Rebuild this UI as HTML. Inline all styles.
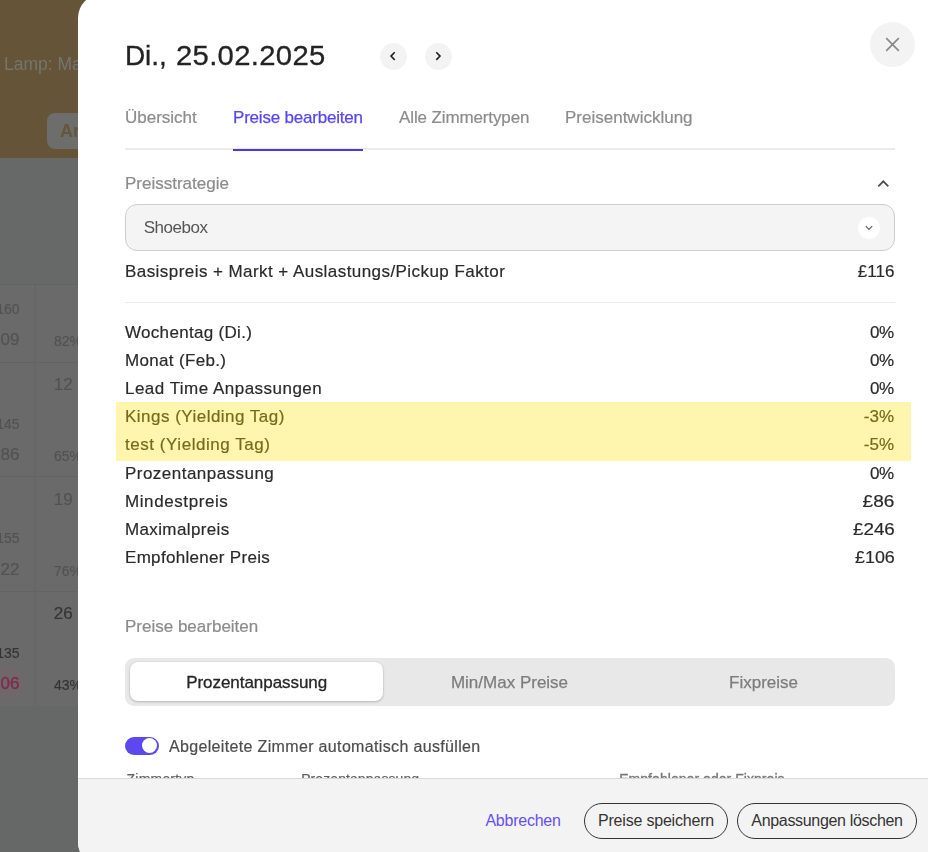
<!DOCTYPE html>
<html lang="de">
<head>
<meta charset="utf-8">
<title>Preise bearbeiten</title>
<style>
*{box-sizing:border-box;margin:0;padding:0}
html,body{width:928px;height:852px;overflow:hidden}
body{font-family:"Liberation Sans",sans-serif;background:#676868;position:relative;color:#262626}
.abs{position:absolute;white-space:nowrap}
/* ---------- dimmed background page ---------- */
.bgwrap{left:0;top:0;width:90px;height:852px;will-change:transform;overflow:hidden}
.bg-top{left:0;top:0;width:928px;height:158px;background:#655437}
.bg-cells{left:0;top:285px;width:90px;height:421px;background:#6a6a6a}
.bg-lamp{left:4px;top:54px;font-size:17.5px;color:#747572;line-height:20px}
.bg-btn{left:47px;top:113px;width:60px;height:36px;border-radius:8px;background:#6d6d6c}
.bg-btn span{position:absolute;left:13px;top:8px;font-size:18px;font-weight:bold;color:#65553a;line-height:20px}
.bg-line-h{left:0;height:1px;background:#626363;width:90px}
.bg-line-v{top:285px;width:2px;height:421px;background:#656766}
.bg-foot{left:0;top:706px;width:90px;height:146px;background:#666867}
.bg-n{line-height:16px;-webkit-text-stroke:0.15px}
/* ---------- modal ---------- */
.modal{will-change:transform;left:78px;top:-6px;width:900px;height:872px;background:#fff;border-radius:24px;overflow:hidden}
.m{position:absolute;left:-78px;top:6px;width:928px;height:852px}
.title{left:125px;top:37px;font-size:28px;line-height:38px;color:#232323;letter-spacing:0.74px;-webkit-text-stroke:0.3px #232323}
.circ{border-radius:50%;background:#f3f3f3}
.tab{top:108.4px;font-size:17px;line-height:20px;color:#8c8c8c;-webkit-text-stroke:0.2px #8c8c8c}
.tab.act{color:#5847ee;-webkit-text-stroke:0.25px #5847ee}
.lbl{font-size:17px;line-height:20px;color:#8c8c8c;-webkit-text-stroke:0.2px #8c8c8c}
.row{left:125px;width:770px;height:20px;font-size:17px;line-height:20px;color:#2a2a2a;-webkit-text-stroke:0.18px #2a2a2a}
.row .l{position:absolute;left:0;top:0;letter-spacing:0.44px}
.row .r{position:absolute;right:1px;top:0}
.row.y{color:#766b1b;-webkit-text-stroke:0.18px #766b1b}
.seg{left:125px;top:658px;width:770px;height:48px;border-radius:9px;background:#e8e8e8}
.seg .pill{position:absolute;left:4.5px;top:4.2px;width:253.7px;height:39px;border-radius:8px;background:#fff;box-shadow:0 1px 2.5px rgba(0,0,0,.2),0 0 1.5px rgba(0,0,0,.12)}
.segt{top:673px;font-size:17px;line-height:20px;text-align:center;width:253px}
.hd{top:771.4px;font-size:14px;line-height:16px;color:#606060;letter-spacing:0.2px;-webkit-text-stroke:0.2px #606060}
.fwrap{left:0;top:0;width:928px;height:852px;overflow:hidden}
.footer{left:78px;top:778px;width:860px;height:88px;background:#f3f3f3;border-top:1px solid #d9d9d9;border-bottom-left-radius:24px}
.btn{top:803px;height:35.5px;border:1.2px solid #333;border-radius:18px;font-size:16px;line-height:20px;padding-top:7.1px;text-align:center;color:#333}
</style>
</head>
<body>
<!-- background page (dimmed) -->
<div class="abs bgwrap">
<div class="abs bg-top"></div>
<div class="abs bg-lamp">Lamp: Ma</div>
<div class="abs bg-btn"><span>An</span></div>
<div class="abs bg-cells"></div>
<div class="abs bg-foot"></div>
<div class="abs bg-line-h" style="top:284px"></div>
<div class="abs bg-line-h" style="top:362px"></div>
<div class="abs bg-line-h" style="top:476px"></div>
<div class="abs bg-line-h" style="top:591px"></div>
<div class="abs bg-line-v" style="left:34px"></div>
<div class="abs bg-n" style="left:-3.8px;top:301.2px;font-size:14px;color:#515252">160</div>
<div class="abs bg-n" style="left:0.5px;top:332.2px;font-size:17px;color:#515252">09</div>
<div class="abs bg-n" style="left:54px;top:332.8px;font-size:14px;color:#515252">82%</div>
<div class="abs bg-n" style="left:-3.8px;top:415.8px;font-size:14px;color:#515252">145</div>
<div class="abs bg-n" style="left:0.5px;top:447.3px;font-size:17px;color:#515252">86</div>
<div class="abs bg-n" style="left:54px;top:448.1px;font-size:14px;color:#515252">65%</div>
<div class="abs bg-n" style="left:53.7px;top:377.1px;font-size:17px;color:#515252">12</div>
<div class="abs bg-n" style="left:-3.8px;top:530.2px;font-size:14px;color:#515252">155</div>
<div class="abs bg-n" style="left:0.5px;top:561.8px;font-size:17px;color:#515252">22</div>
<div class="abs bg-n" style="left:54px;top:562.6px;font-size:14px;color:#515252">76%</div>
<div class="abs bg-n" style="left:53.7px;top:491.6px;font-size:17px;color:#515252">19</div>
<div class="abs" style="left:-20px;top:667px;width:44.6px;height:32px;border-radius:16px;background:#6f676a"></div>
<div class="abs bg-n" style="left:-3.8px;top:644.8px;font-size:14px;color:#343434">135</div>
<div class="abs bg-n" style="left:0.5px;top:676.3px;font-size:17px;color:#7e2b4a;-webkit-text-stroke:0.3px #7e2b4a">06</div>
<div class="abs bg-n" style="left:54px;top:677.1px;font-size:14px;color:#343434">43%</div>
<div class="abs bg-n" style="left:53.7px;top:606.1px;font-size:17px;color:#343434">26</div>
</div>

<!-- modal -->
<div class="abs modal"><div class="m">

<div class="abs title" style="letter-spacing:-0.1px">Di.,</div>
<div class="abs title" style="left:176px;letter-spacing:0.3px;transform:scaleX(1.045);transform-origin:left center">25.02.2025</div>

<div class="abs circ" style="left:380px;top:43px;width:27px;height:27px"></div>
<div class="abs circ" style="left:425px;top:43px;width:27px;height:27px"></div>
<svg class="abs" style="left:380px;top:43px" width="27" height="27" viewBox="0 0 27 27"><path d="M14.7 9.3 L11 13.1 L14.7 16.9" fill="none" stroke="#222" stroke-width="1.6"/></svg>
<svg class="abs" style="left:425px;top:43px" width="27" height="27" viewBox="0 0 27 27"><path d="M11.3 9.3 L15 13.1 L11.3 16.9" fill="none" stroke="#222" stroke-width="1.6"/></svg>

<div class="abs circ" style="left:870px;top:22px;width:45px;height:45px"></div>
<svg class="abs" style="left:870px;top:22px" width="45" height="45" viewBox="0 0 45 45"><path d="M16.2 16.2 L28.8 28.8 M28.8 16.2 L16.2 28.8" fill="none" stroke="#8a8a8a" stroke-width="1.7"/></svg>

<div class="abs tab" style="left:125px">Übersicht</div>
<div class="abs tab act" style="left:233px;letter-spacing:-0.2px">Preise bearbeiten</div>
<div class="abs tab" style="left:399px;letter-spacing:-0.12px">Alle Zimmertypen</div>
<div class="abs tab" style="left:565px">Preisentwicklung</div>
<div class="abs" style="left:125px;top:148px;width:770px;height:2px;background:#ebebeb"></div>
<div class="abs" style="left:233px;top:149px;width:130px;height:2px;background:#4c39e6"></div>

<div class="abs lbl" style="left:125px;top:173.8px">Preisstrategie</div>
<svg class="abs" style="left:875px;top:176px" width="16" height="14" viewBox="0 0 16 14"><path d="M3.3 10.4 L8.3 5.3 L13.3 10.4" fill="none" stroke="#4d4d4d" stroke-width="1.7"/></svg>

<div class="abs" style="left:125px;top:204px;width:770px;height:47px;border:1px solid #cdcdcd;border-radius:12px;background:#f4f4f4"></div>
<div class="abs" style="left:143.7px;top:218px;font-size:17px;line-height:20px;color:#555;letter-spacing:-0.45px">Shoebox</div>
<div class="abs circ" style="left:858px;top:217px;width:22px;height:22px;background:#fff"></div>
<svg class="abs" style="left:858px;top:217px" width="22" height="22" viewBox="0 0 22 22"><path d="M7.8 9.2 L11 12.4 L14.2 9.2" fill="none" stroke="#5e5e5e" stroke-width="1.15"/></svg>

<div class="abs row" style="top:262.1px"><span class="l" style="letter-spacing:0.44px">Basispreis + Markt + Auslastungs/Pickup Faktor</span><span class="r" style="letter-spacing:0.07px;margin-right:-0.5px">£116</span></div>
<div class="abs" style="left:125px;top:302px;width:770px;height:1px;background:#ececec"></div>

<div class="abs" style="left:116px;top:402px;width:795px;height:59px;background:#fef5ae"></div>
<div class="abs row" style="top:322.9px"><span class="l" style="letter-spacing:0.31px">Wochentag (Di.)</span><span class="r" style="letter-spacing:-0.6px;margin-right:0.6px">0%</span></div>
<div class="abs row" style="top:350.9px"><span class="l" style="letter-spacing:0.33px">Monat (Feb.)</span><span class="r" style="letter-spacing:-0.6px;margin-right:0.6px">0%</span></div>
<div class="abs row" style="top:378.6px"><span class="l" style="letter-spacing:0.48px">Lead Time Anpassungen</span><span class="r" style="letter-spacing:-0.6px;margin-right:0.6px">0%</span></div>
<div class="abs row y" style="top:406.6px"><span class="l" style="letter-spacing:0.48px">Kings (Yielding Tag)</span><span class="r" style="letter-spacing:0px;margin-right:0px">-3%</span></div>
<div class="abs row y" style="top:434.5px"><span class="l" style="letter-spacing:0.55px">test (Yielding Tag)</span><span class="r" style="letter-spacing:0px;margin-right:0px">-5%</span></div>
<div class="abs row" style="top:463.7px"><span class="l" style="letter-spacing:0.47px">Prozentanpassung</span><span class="r" style="letter-spacing:-0.6px;margin-right:0.6px">0%</span></div>
<div class="abs row" style="top:491.7px"><span class="l" style="letter-spacing:0.59px">Mindestpreis</span><span class="r" style="transform:scaleX(1.12);transform-origin:right center;margin-right:-0.3px">£86</span></div>
<div class="abs row" style="top:519.7px"><span class="l" style="letter-spacing:0.37px">Maximalpreis</span><span class="r" style="transform:scaleX(1.105);transform-origin:right center;margin-right:-1px">£246</span></div>
<div class="abs row" style="top:547.7px"><span class="l" style="letter-spacing:0.31px">Empfohlener Preis</span><span class="r" style="transform:scaleX(1.052);transform-origin:right center;margin-right:-1px">£106</span></div>

<div class="abs lbl" style="left:125px;top:617.1px">Preise bearbeiten</div>
<div class="abs seg"><div class="pill"></div></div>
<div class="abs segt" style="left:130.2px;color:#262626;-webkit-text-stroke:0.3px #262626;letter-spacing:-0.05px">Prozentanpassung</div>
<div class="abs segt" style="left:383px;color:#7d7d7d;-webkit-text-stroke:0.25px #7d7d7d">Min/Max Preise</div>
<div class="abs segt" style="left:637px;color:#7d7d7d;-webkit-text-stroke:0.25px #7d7d7d">Fixpreise</div>

<div class="abs" style="left:125px;top:737px;width:34px;height:17.7px;border-radius:9px;background:#5b48ee"></div>
<div class="abs" style="left:142.2px;top:738.4px;width:15px;height:15px;border-radius:8px;background:#fff"></div>
<div class="abs" style="left:169px;top:736.6px;font-size:16px;line-height:20px;letter-spacing:0.34px;color:#4d4d4d;-webkit-text-stroke:0.2px #4d4d4d">Abgeleitete Zimmer automatisch ausfüllen</div>

<div class="abs hd" style="left:126.6px">Zimmertyp</div>
<div class="abs hd" style="left:301.2px;letter-spacing:0.08px">Prozentanpassung</div>
<div class="abs hd" style="left:619.2px;letter-spacing:0.05px;color:#777;-webkit-text-stroke:0.35px #777">Empfohlener oder Fixpreis</div>

</div></div>

<!-- footer (separate layer) -->
<div class="abs fwrap">
<div class="abs footer"></div>
<div class="abs" style="left:485.4px;top:811.3px;font-size:16px;line-height:20px;color:#6650f0;letter-spacing:-0.24px">Abbrechen</div>
<div class="abs btn" style="left:584px;width:144px;letter-spacing:-0.2px">Preise speichern</div>
<div class="abs btn" style="left:737px;width:180px;letter-spacing:-0.32px">Anpassungen löschen</div>

</div>
</body>
</html>
